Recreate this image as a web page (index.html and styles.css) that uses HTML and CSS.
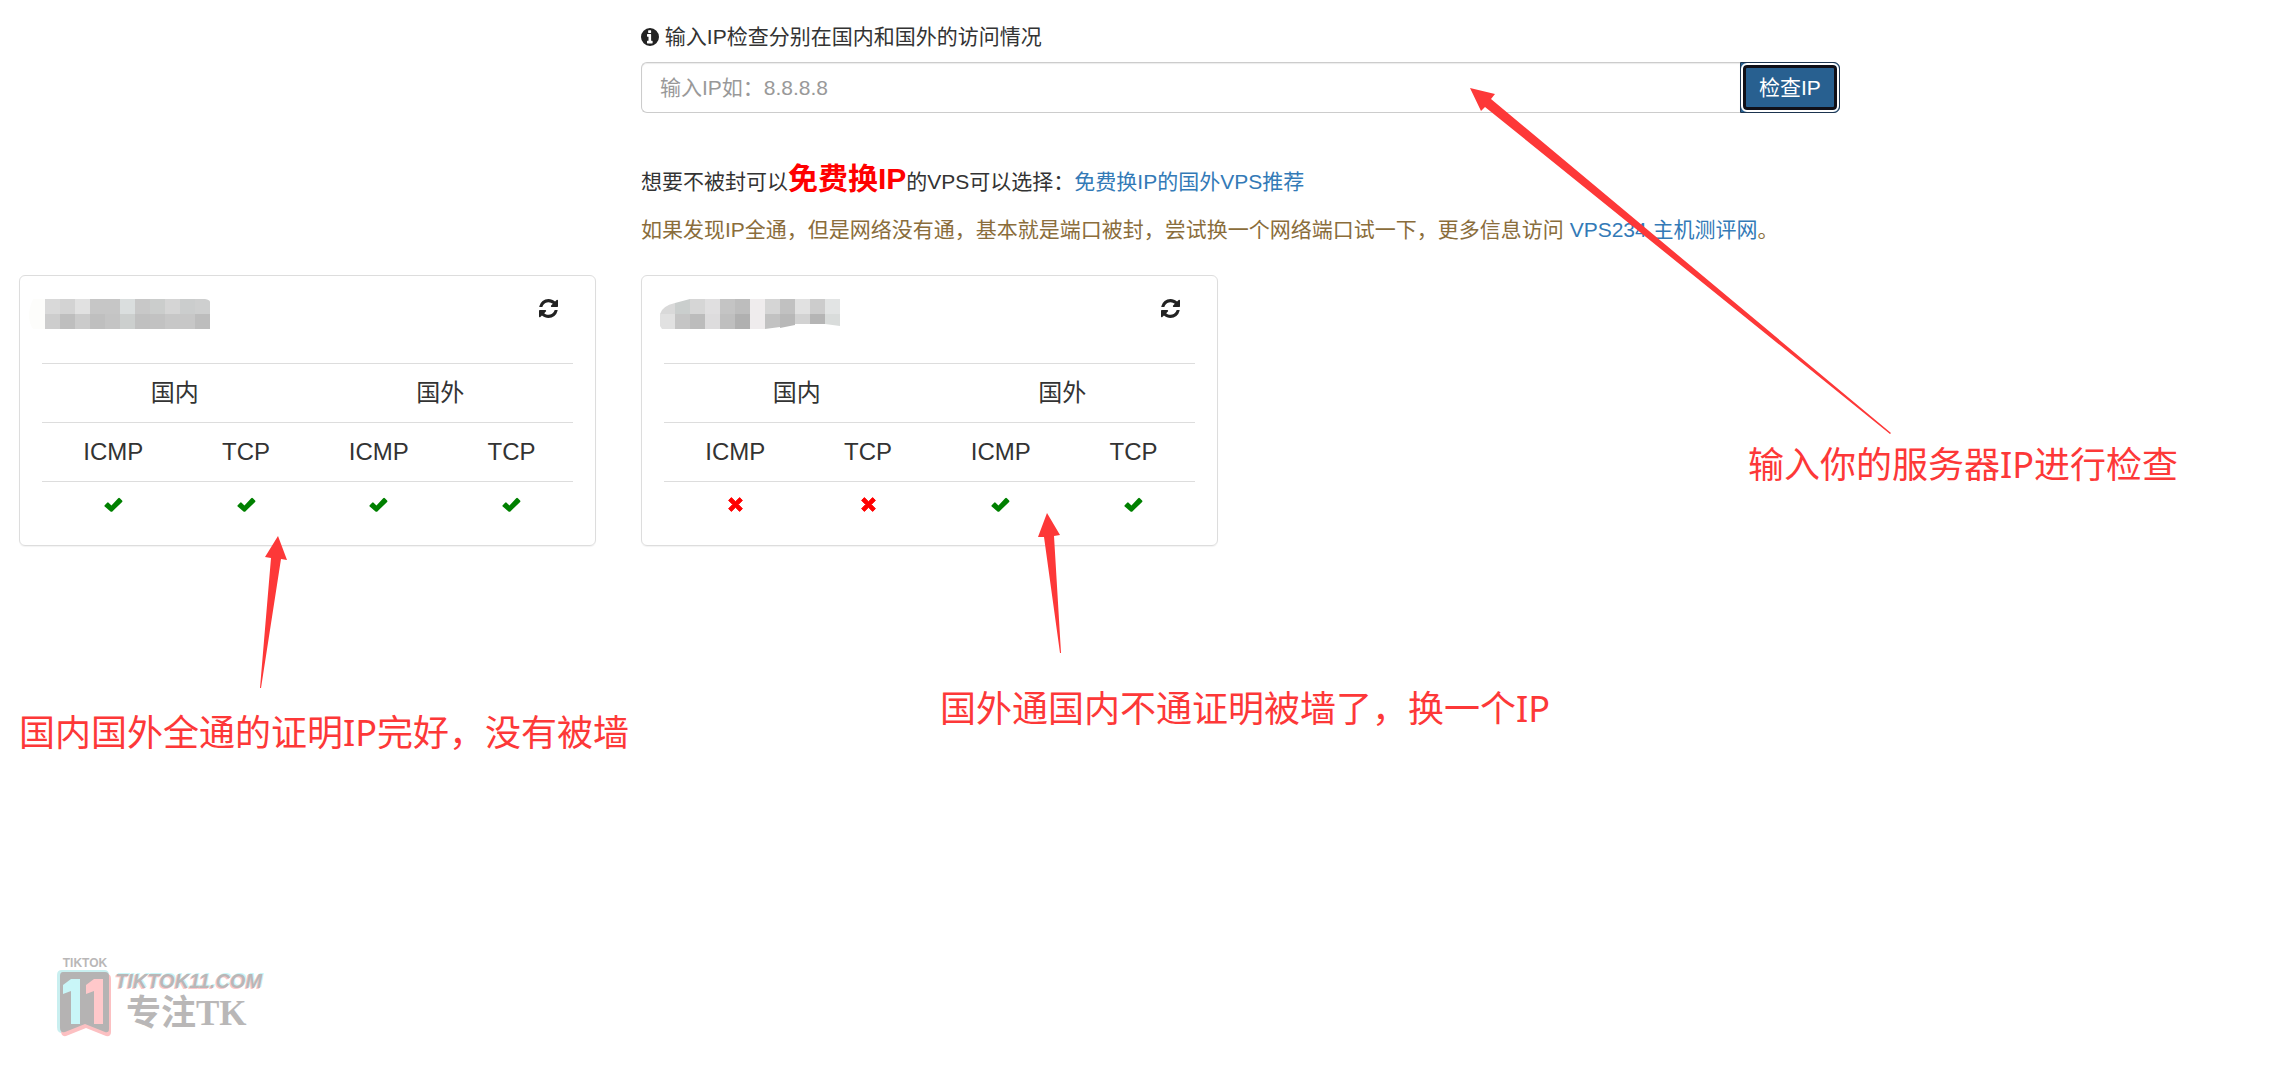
FILE: index.html
```
<!DOCTYPE html>
<html lang="zh-CN">
<head>
    <meta charset="UTF-8">
    <meta name="viewport" content="width=device-width, initial-scale=1.0">
    <title>IP检查</title>
    <link rel="stylesheet" href="styles.css">
</head>
<body>

    <!-- shared icons -->
    <svg class="sprite" aria-hidden="true">
        <symbol id="info" viewBox="0 0 1536 1536">
            <path fill-rule="evenodd" d="M768 0a768 768 0 1 0 0 1536a768 768 0 1 0 0-1536zM640 192h192q32 0 32 32v160q0 32-32 32h-192q-32 0-32-32v-160q0-32 32-32zM544 512h288q32 0 32 32v544h96q32 0 32 32v160q0 32-32 32h-416q-32 0-32-32v-160q0-32 32-32h96v-352h-96q-32 0-32-32v-160q0-32 32-32z"/>
        </symbol>
        <symbol id="refresh" viewBox="0 0 1536 1536">
            <path d="M1511 928q0 5-1 7q-64 268-268 434.500t-478 166.500q-146 0-282.500-55t-243.500-157l-129 129q-19 19-45 19t-45-19t-19-45v-448q0-26 19-45t45-19h448q26 0 45 19t19 45t-19 45l-137 137q71 66 161 102t187 36q134 0 250-65t186-179q11-17 53-117q8-23 30-23h192q13 0 22.500 9.500t9.500 22.500zM1536 128v448q0 26-19 45t-45 19h-448q-26 0-45-19t-19-45t19-45l138-138q-148-137-349-137q-134 0-250 65t-186 179q-11 17-53 117q-8 23-30 23h-199q-13 0-22.500-9.500t-9.500-22.500v-7q65-268 270-434.500t480-166.500q146 0 284 55.500t245 156.500l130-129q19-19 45-19t45 19t19 45z"/>
        </symbol>
        <symbol id="check" viewBox="0 0 20 16">
            <path d="M0.600 8.800L3.200 6Q4 5.400 4.800 6L7.800 9L15 1.200Q15.900 0.500 16.800 1.200L19.200 3.600Q19.800 4.400 19.200 5.200L8.800 15.400Q7.800 16 6.800 15.400L0.600 10.200Q0 9.500 0.600 8.800z"/>
        </symbol>
        <symbol id="times" viewBox="0 0 16 16">
            <path d="M3.600 0.600L8 5L12.400 0.600L15.400 3.600L11 8L15.400 12.400L12.400 15.400L8 11L3.600 15.400L0.600 12.400L5 8L0.600 3.600z" stroke-width="1" stroke-linejoin="round" stroke="currentColor"/>
        </symbol>
    </svg>

    <main class="page">
        <form class="search" onsubmit="return false">
            <label for="ip"><svg class="icon-info"><use href="#info"/></svg> 输入IP检查分别在国内和国外的访问情况</label>
            <div class="input-group">
                <input type="text" id="ip" placeholder="输入IP如：8.8.8.8">
                <button type="submit">检查IP</button>
            </div>
            <p class="tip">想要不被封可以<strong>免费换IP</strong>的VPS可以选择：<a href="#">免费换IP的国外VPS推荐</a></p>
            <p class="warning">如果发现IP全通，但是网络没有通，基本就是端口被封，尝试换一个网络端口试一下，更多信息访问 <a href="#">VPS234 主机测评网</a>。</p>
        </form>

        <section class="card">
            <div class="card-head">
                <svg class="mosaic" viewBox="0 0 190 30" aria-hidden="true">
                    <path fill="#fdfdfb" d="M8 0h12v30h-12q-8-12 0-30z"/>
                    <path fill="#d9d9d9" d="M20 0h15v15h-15z"/><path fill="#cdcdcd" d="M20 15h15v15h-15z"/>
                    <path fill="#d3d3d3" d="M35 0h15v15h-15z"/><path fill="#bebebe" d="M35 15h15v15h-15z"/>
                    <path fill="#e1e1e1" d="M50 0h15v15h-15z"/><path fill="#cbcbcb" d="M50 15h15v15h-15z"/>
                    <path fill="#c6c6c6" d="M65 0h30v15h-30z"/><path fill="#bfbfbf" d="M65 15h15v15h-15z"/>
                    <path fill="#c4c4c4" d="M80 15h15v15h-15z"/><path fill="#dadede" d="M95 0h15v15h-15z"/>
                    <path fill="#cccfce" d="M95 15h15v15h-15z"/><path fill="#c8c8c8" d="M110 0h15v15h-15z"/>
                    <path fill="#c0c0c0" d="M110 15h15v15h-15z"/><path fill="#cbcdcc" d="M125 0h15v15h-15z"/>
                    <path fill="#c2c2c2" d="M125 15h15v15h-15z"/><path fill="#d5d5d5" d="M140 0h15v15h-15z"/>
                    <path fill="#c7c7c7" d="M140 15h30v15h-30z"/><path fill="#cbcdcd" d="M155 0h15v15h-15z"/>
                    <path fill="#cecfcf" d="M170 0h10q5 1 5 3v12h-15z"/><path fill="#bdbdbd" d="M170 15h15v15h-15z"/>
                </svg>
                <button type="button" class="refresh" aria-label="刷新"><svg><use href="#refresh"/></svg></button>
            </div>
            <table>
                <tr><th colspan="2">国内</th><th colspan="2">国外</th></tr>
                <tr class="proto"><th>ICMP</th><th>TCP</th><th>ICMP</th><th>TCP</th></tr>
                <tr class="result">
                    <td><svg class="ok"><use href="#check"/></svg></td>
                    <td><svg class="ok"><use href="#check"/></svg></td>
                    <td><svg class="ok"><use href="#check"/></svg></td>
                    <td><svg class="ok"><use href="#check"/></svg></td>
                </tr>
            </table>
        </section>

        <section class="card">
            <div class="card-head">
                <svg class="mosaic" viewBox="0 0 190 30" aria-hidden="true">
                    <path fill="#d9d9d9" d="M13 15q2-8 15-11v11z"/><path fill="#e1e1e1" d="M13 15h15v15h-13l-2-3z"/>
                    <path fill="#cacecd" d="M28 4l15-4v15h-15z"/><path fill="#c5c5c5" d="M28 15h15v15h-15z"/>
                    <path fill="#d6d6d6" d="M43 0h15v15h-15z"/><path fill="#bcbcbc" d="M43 15h15v15h-15z"/>
                    <path fill="#e0dfe0" d="M58 0h15v15h-15z"/><path fill="#dddcdd" d="M58 15h15v15h-15z"/>
                    <path fill="#c4c4c4" d="M73 0h15v15h-15z"/><path fill="#bfbfbf" d="M73 15h15v15h-15z"/>
                    <path fill="#bdbdbd" d="M88 0h15v15h-15z"/><path fill="#b0b0b0" d="M88 15h15v15h-15z"/>
                    <path fill="#efeced" d="M103 0h15v30h-15z"/><path fill="#d5d5d5" d="M118 0h15v15h-15z"/>
                    <path fill="#c2c2c2" d="M118 15h15v13l-15 2z"/><path fill="#c1c1c1" d="M133 0h15v15h-15z"/>
                    <path fill="#b8b8b8" d="M133 15h15v11l-15 3z"/><path fill="#e1e1e1" d="M148 0h15v15h-15z"/>
                    <path fill="#d2d2d2" d="M148 15h15v10h-15z"/><path fill="#cccccc" d="M163 0h15v15h-15z"/>
                    <path fill="#b5b5b5" d="M163 15h15v10h-15z"/><path fill="#e2e4e4" d="M178 0h15v15h-15z"/>
                    <path fill="#d9dcdb" d="M178 15h15v12l-15-2z"/>
                </svg>
                <button type="button" class="refresh" aria-label="刷新"><svg><use href="#refresh"/></svg></button>
            </div>
            <table>
                <tr><th colspan="2">国内</th><th colspan="2">国外</th></tr>
                <tr class="proto"><th>ICMP</th><th>TCP</th><th>ICMP</th><th>TCP</th></tr>
                <tr class="result">
                    <td><svg class="bad"><use href="#times"/></svg></td>
                    <td><svg class="bad"><use href="#times"/></svg></td>
                    <td><svg class="ok"><use href="#check"/></svg></td>
                    <td><svg class="ok"><use href="#check"/></svg></td>
                </tr>
            </table>
        </section>
    </main>

    <!-- annotations over the page -->
    <svg class="arrows" aria-hidden="true">
        <path d="M1470 88L1495 94L1491 99L1891 433L1890 434L1485 107L1481 111z"/>
        <path d="M278 536L287 560L281 559L261 688L260 688L271 558L265 557z"/>
        <path d="M1047 513L1060 535L1054 536L1061 653L1060 653L1044 537L1038 537z"/>
    </svg>
    <p class="note note-input">输入你的服务器IP进行检查</p>
    <p class="note note-ok">国内国外全通的证明IP完好，没有被墙</p>
    <p class="note note-blocked">国外通国内不通证明被墙了，换一个IP</p>

    <div class="watermark">
        <div class="badge">
            <span class="badge-text">TIKTOK</span>
            <svg viewBox="0 0 56 68" aria-hidden="true">
                <path fill="#c9eff0" d="M5 0h42q5 0 5 5v52q0 5-5 4l-20-7l-20 9q-7 1-7-6v-52q0-5 5-5z"/>
                <path fill="#fcc0c2" d="M8 4h42q4 0 4 5v53q0 5-5 4l-20-8l-20 8q-5 1-5-5z"/>
                <path fill="#b5b3b3" d="M6 2h42q4 0 4 4v53q0 4-4 3l-20-8l-20 8q-5 1-5-4v-52q0-4 3-4z"/>
                <path fill="#c9f6f8" d="M14 9h9v45h-9v-33l-8 3v-9z"/>
                <path fill="#ffc8ca" d="M37 9h9v45h-9v-33l-8 3v-9z"/>
            </svg>
        </div>
        <div class="brand">
            <span class="brand-site">TIKTOK11.COM</span>
            <span class="brand-name">专注TK</span>
        </div>
    </div>

</body>
</html>
```
FILE: styles.css
```
:root {
    --text-color: #333;
    --link-color: #337ab7;
    --line-color: #ddd;
    --note-color: #fd3838;
}

* {
    box-sizing: border-box;
}

body {
    position: relative;
    min-height: 100vh;
    margin: 0;
    overflow-x: hidden;
    background-color: #fff;
    color: var(--text-color);
    font-family: "Liberation Sans", "Noto Sans CJK SC", sans-serif;
    font-size: 21px;
    line-height: 30px;
}
a {
    color: var(--link-color);
    text-decoration: none;
}
p {
    margin: 0;
}
.sprite {
    position: absolute;
    width: 0;
    height: 0;
}

.page {
    display: grid;
    grid-template-columns: repeat(3, 1fr);
    column-gap: 45px;
    width: 79.9%;
    margin-left: 19px;
    padding-top: 22px;
}

/* Search form */
.search {
    grid-column: 2 / 4;
    margin-bottom: 30px;
}
.search label {
    display: block;
    margin-bottom: 10px;
}
.icon-info {
    width: 18px;
    height: 18px;
    vertical-align: -2px;
    fill: #222;
}
.input-group {
    display: flex;
    height: 51px;
    margin-bottom: 48px;
}
.input-group input {
    flex: 1;
    min-width: 0;
    padding: 0 18px;
    border: 1px solid #ccc;
    border-right: none;
    border-radius: 6px 0 0 6px;
    box-shadow: inset 0 1px 1px rgba(0, 0, 0, 0.08);
    font: inherit;
}
.input-group input::placeholder {
    color: #999;
}
.input-group button {
    position: relative;
    width: 100px;
    padding: 0;
    border: 1px solid #1d3550;
    border-radius: 0 6px 6px 0;
    background-color: #286090;
    color: #fff;
    font: inherit;
    cursor: pointer;
}
/* focus ring */
.input-group button::after {
    content: "";
    position: absolute;
    inset: 0;
    border: 2px solid #fff;
    border-radius: 6px;
    box-shadow: inset 0 0 0 3px #101018;
}
.tip {
    margin-bottom: 15px;
    line-height: 36px;
}
.tip strong {
    color: red;
    font-size: 30px;
    font-weight: bold;
}
.warning {
    color: #8a6d3b;
}

/* Result cards */
.card {
    padding: 23px 22px 20px;
    border: 1px solid var(--line-color);
    border-radius: 6px;
    box-shadow: 0 1px 1px rgba(0, 0, 0, 0.05);
}
.card-head {
    display: flex;
    justify-content: space-between;
    align-items: flex-start;
    height: 64px;
    padding-right: 15px;
}
.mosaic {
    width: 190px;
    height: 30px;
    margin-left: -17px;
    overflow: visible;
}
.refresh {
    display: flex;
    padding: 0;
    border: none;
    background: none;
    cursor: pointer;
}
.refresh svg {
    width: 19px;
    height: 19px;
    fill: #222;
}
table {
    width: 100%;
    table-layout: fixed;
    border-collapse: collapse;
    font-size: 24px;
    line-height: 34px;
    text-align: center;
}
th, td {
    padding: 12px;
    border-top: 1px solid var(--line-color);
    font-weight: normal;
}
.proto th {
    padding-left: 22px;
}
.result td {
    padding: 9px 12px 10px 22px;
    line-height: 24px;
}
.result svg {
    height: 15px;
    vertical-align: middle;
}
.ok {
    width: 19px;
    color: green;
    fill: green;
}
.bad {
    width: 15px;
    color: red;
    fill: red;
}

/* Annotations */
.arrows {
    position: absolute;
    top: 0;
    left: 0;
    width: 100%;
    height: 100%;
    fill: var(--note-color);
    pointer-events: none;
}
.note {
    position: absolute;
    color: var(--note-color);
    font-family: "Noto Sans", "Noto Sans CJK SC", sans-serif;
    font-size: 36px;
    line-height: 48px;
    white-space: nowrap;
}
.note-input {
    top: 441px;
    left: 1748px;
}
.note-ok {
    top: 709px;
    left: 19px;
}
.note-blocked {
    top: 685px;
    left: 940px;
}

/* Watermark */
.watermark {
    position: absolute;
    top: 957px;
    left: 57px;
    display: flex;
    gap: 2px;
    color: #b9b7b7;
    font-weight: bold;
}
.badge {
    width: 56px;
}
.badge svg {
    display: block;
    width: 56px;
    height: 68px;
}
.badge-text {
    display: block;
    font-size: 12px;
    line-height: 13px;
    text-align: center;
}
.brand {
    padding-top: 12px;
}
.brand span {
    display: block;
}
.brand-site {
    font-size: 20px;
    font-style: italic;
    line-height: 24px;
    text-shadow: -1px 1px #fcc8ca, 1px -1px #c9f6f8;
}
.brand-name {
    padding-left: 11px;
    font-family: "Liberation Serif", "Noto Sans CJK SC", serif;
    font-size: 35px;
    line-height: 42px;
}
```
